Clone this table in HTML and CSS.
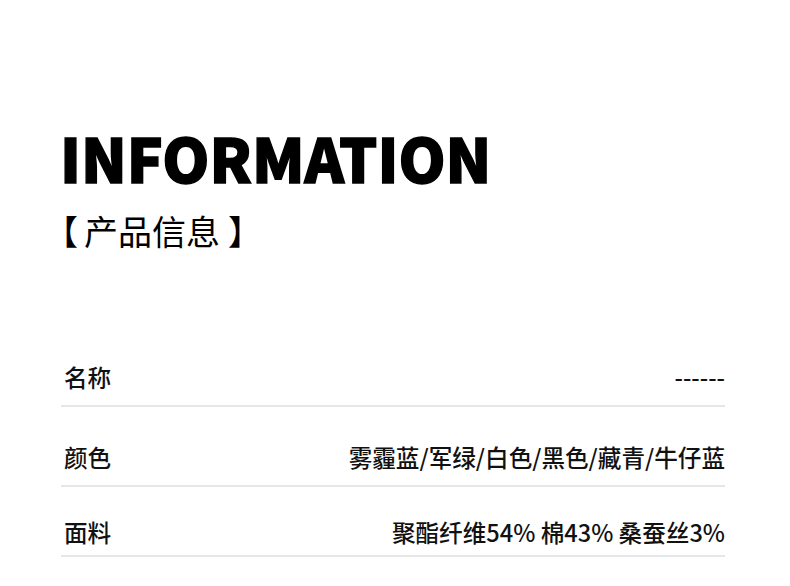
FILE: index.html
```html
<!DOCTYPE html>
<html lang="zh-CN">
<head>
<meta charset="utf-8">
<title>INFORMATION</title>
<link rel="stylesheet" href="styles.css">
</head>
<body>
<main class="page">
  <h1 class="title">INFORMATION</h1>
  <h2 class="subtitle"><span class="bracket bracket--open">【</span>产品信息<span class="bracket bracket--close">】</span></h2>
  <section class="table">
    <div class="row">
      <span class="label">名称</span>
      <span class="value">------</span>
    </div>
    <div class="row">
      <span class="label">颜色</span>
      <span class="value">雾霾蓝/军绿/白色/黑色/藏青/牛仔蓝</span>
    </div>
    <div class="row row--tight">
      <span class="label">面料</span>
      <span class="value">聚酯纤维54% 棉43% 桑蚕丝3%</span>
    </div>
  </section>
</main>
</body>
</html>
```
FILE: styles.css
```css
html, body {
  margin: 0;
  padding: 0;
  background: #ffffff;
}
body {
  font-family: "Noto Sans CJK SC", "Noto Sans", sans-serif;
  color: #000;
}
.page {
  width: 790px;
  height: 586px;
  box-sizing: border-box;
  padding: 127px 65px 0 60px;
  overflow: hidden;
}
.title {
  margin: 0;
  font-size: 60px;
  line-height: 1;
  font-weight: 900;
  letter-spacing: 0;
  -webkit-text-stroke: 1.4px #000;
}
.subtitle {
  margin: 27px 0 0 0;
  font-size: 34px;
  line-height: 1;
  font-weight: 400;
}
.bracket--open {
  margin-left: -16px;
  margin-right: 6px;
}
.bracket--close {
  margin-left: 8px;
}
.table {
  margin: 79px 0 0 1px;
}
.row {
  display: flex;
  justify-content: space-between;
  align-items: center;
  padding: 38px 0 16px 0;
  border-bottom: 2px solid #e6e6e6;
  font-size: 23.6px;
  line-height: 24px;
  font-weight: 500;
  color: #111;
}
.row--tight {
  padding: 33px 0 11px 0;
}
.label {
  margin-left: 3px;
}
```
